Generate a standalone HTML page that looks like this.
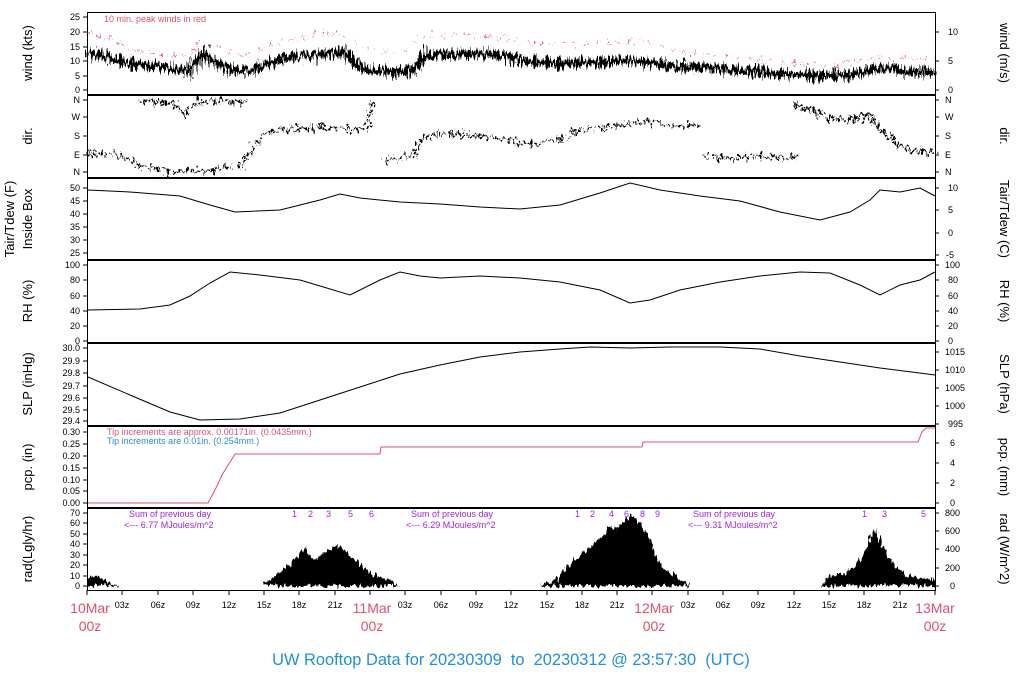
<!DOCTYPE html>
<html><head><meta charset="utf-8"><style>
html,body{margin:0;padding:0;background:#fff;}
svg{display:block;font-family:"Liberation Sans",sans-serif;}
.t{font-size:9px;fill:#000;}
.ti{font-size:13px;fill:#000;}
</style></head><body>
<svg width="1024" height="700" viewBox="0 0 1024 700">
<defs>
<filter id="jag" x="-5%" y="-50%" width="110%" height="200%">
<feTurbulence type="fractalNoise" baseFrequency="0.6 0.08" numOctaves="2" seed="3"/>
<feDisplacementMap in="SourceGraphic" scale="20" xChannelSelector="R" yChannelSelector="G"/>
</filter>
<filter id="jag2" x="-5%" y="-50%" width="110%" height="200%">
<feTurbulence type="fractalNoise" baseFrequency="0.4 0.1" numOctaves="2" seed="7"/>
<feDisplacementMap in="SourceGraphic" scale="10" xChannelSelector="R" yChannelSelector="G"/>
</filter>
<filter id="jag3" x="-5%" y="-50%" width="110%" height="200%">
<feTurbulence type="fractalNoise" baseFrequency="0.3 0.15" numOctaves="2" seed="11"/>
<feDisplacementMap in="SourceGraphic" scale="16" xChannelSelector="R" yChannelSelector="G"/>
</filter>
</defs>
<g fill="none" stroke="#000" stroke-width="1">
<rect x="87.5" y="12.5" width="848" height="82"/>
<rect x="87.5" y="95.5" width="848" height="82"/>
<rect x="87.5" y="178.5" width="848" height="81"/>
<rect x="87.5" y="260.5" width="848" height="82"/>
<rect x="87.5" y="343.5" width="848" height="82"/>
<rect x="87.5" y="426.5" width="848" height="81"/>
<rect x="87.5" y="508.5" width="848" height="82"/>
</g>
<g stroke="#000" stroke-width="1">
<path d="M83 17H87M83 32H87M83 47H87M83 61H87M83 76H87M83 90H87 M935 32H939M935 61H939M935 90H939"/>
<path d="M83 100H87M83 117H87M83 136H87M83 155H87M83 172H87M935 100H939M935 117H939M935 136H939M935 155H939M935 172H939"/>
<path d="M83 188H87M83 201H87M83 214H87M83 227H87M83 240H87M83 253H87M935 188H939M935 210H939M935 233H939M935 255H939"/>
<path d="M83 265H87M83 280H87M83 296H87M83 311H87M83 326H87M83 341H87M935 265H939M935 280H939M935 296H939M935 311H939M935 326H939M935 341H939"/>
<path d="M83 348H87M83 361H87M83 373H87M83 386H87M83 398H87M83 410H87M83 421H87M935 352H939M935 370H939M935 388H939M935 406H939M935 424H939"/>
<path d="M83 432H87M83 444H87M83 456H87M83 468H87M83 480H87M83 491H87M83 503H87M935 443H939M935 463H939M935 483H939M935 503H939"/>
<path d="M83 513H87M83 523H87M83 534H87M83 544H87M83 555H87M83 565H87M83 576H87M83 586H87M935 513H939M935 531H939M935 549H939M935 568H939M935 586H939"/>
<path d="M87 590V595M122 590V595M158 590V595M193 590V595M229 590V595M264 590V595M299 590V595M335 590V595M370 590V595M405 590V595M441 590V595M476 590V595M511 590V595M547 590V595M582 590V595M617 590V595M652 590V595M688 590V595M723 590V595M758 590V595M794 590V595M829 590V595M864 590V595M900 590V595M935 590V595"/>
</g>
<g class="t" text-anchor="end">
<text x="80" y="20">25</text><text x="80" y="35">20</text><text x="80" y="50">15</text><text x="80" y="64">10</text><text x="80" y="79">5</text><text x="80" y="93">0</text>
<text x="80" y="103">N</text><text x="80" y="120">W</text><text x="80" y="139">S</text><text x="80" y="158">E</text><text x="80" y="175">N</text>
<text x="80" y="191">50</text><text x="80" y="204">45</text><text x="80" y="217">40</text><text x="80" y="230">35</text><text x="80" y="243">30</text><text x="80" y="256">25</text>
<text x="80" y="268">100</text><text x="80" y="283">80</text><text x="80" y="299">60</text><text x="80" y="314">40</text><text x="80" y="329">20</text><text x="80" y="344">0</text>
<text x="80" y="351">30.0</text><text x="80" y="364">29.9</text><text x="80" y="376">29.8</text><text x="80" y="389">29.7</text><text x="80" y="401">29.6</text><text x="80" y="413">29.5</text><text x="80" y="424">29.4</text>
<text x="80" y="435">0.30</text><text x="80" y="447">0.25</text><text x="80" y="459">0.20</text><text x="80" y="471">0.15</text><text x="80" y="483">0.10</text><text x="80" y="494">0.05</text><text x="80" y="506">0.00</text>
<text x="80" y="516">70</text><text x="80" y="526">60</text><text x="80" y="537">50</text><text x="80" y="547">40</text><text x="80" y="558">30</text><text x="80" y="568">20</text><text x="80" y="579">10</text><text x="80" y="589">0</text>
</g>
<g class="t">
<text x="948" y="35">10</text><text x="948" y="64">5</text><text x="948" y="93">0</text>
<text x="945" y="103">N</text><text x="945" y="120">W</text><text x="945" y="139">S</text><text x="945" y="158">E</text><text x="945" y="175">N</text>
<text x="948" y="191">10</text><text x="948" y="213">5</text><text x="948" y="236">0</text><text x="946" y="258">-5</text>
<text x="945" y="268">100</text><text x="948" y="283">80</text><text x="948" y="299">60</text><text x="948" y="314">40</text><text x="948" y="329">20</text><text x="948" y="344">0</text>
<text x="945" y="355">1015</text><text x="945" y="373">1010</text><text x="945" y="391">1005</text><text x="945" y="409">1000</text><text x="948" y="427">995</text>
<text x="950" y="446">6</text><text x="950" y="466">4</text><text x="950" y="486">2</text><text x="950" y="506">0</text>
<text x="945" y="516">800</text><text x="945" y="534">600</text><text x="945" y="552">400</text><text x="945" y="571">200</text><text x="950" y="589">0</text>
</g>
<g class="ti" text-anchor="middle">
<text transform="translate(32,53) rotate(-90)">wind (kts)</text>
<text transform="translate(32,136) rotate(-90)">dir.</text>
<text transform="translate(14,219) rotate(-90)">Tair/Tdew (F)</text>
<text transform="translate(32,219) rotate(-90)">Inside Box</text>
<text transform="translate(32,301) rotate(-90)">RH (%)</text>
<text transform="translate(32,384) rotate(-90)">SLP (inHg)</text>
<text transform="translate(32,467) rotate(-90)">pcp. (in)</text>
<text transform="translate(32,549) rotate(-90)">rad(Lgly/hr)</text>
<text transform="translate(1000,53) rotate(90)">wind (m/s)</text>
<text transform="translate(1000,136) rotate(90)">dir.</text>
<text transform="translate(1000,219) rotate(90)">Tair/Tdew (C)</text>
<text transform="translate(1000,301) rotate(90)">RH (%)</text>
<text transform="translate(1000,384) rotate(90)">SLP (hPa)</text>
<text transform="translate(1000,467) rotate(90)">pcp. (mm)</text>
<text transform="translate(1000,549) rotate(90)">rad (W/m^2)</text>
</g>
<text x="104" y="22" font-size="9" fill="#e0506e">10 min. peak winds in red</text>
<polyline fill="none" stroke="#e0506e" stroke-width="1" stroke-dasharray="4 7" filter="url(#jag3)" points="88,33 110,38 130,50 160,55 190,56 200,40 220,48 240,56 270,46 300,38 330,32 350,40 370,50 400,55 425,35 450,36 470,34 500,38 530,44 560,45 600,42 640,40 680,52 720,56 760,60 800,64 840,64 870,58 900,58 935,60"/>
<polyline fill="none" stroke="#000" stroke-width="7" stroke-linejoin="round" filter="url(#jag)" points="88,55 100,54 115,60 130,64 160,67 190,71 197,60 205,53 215,62 230,70 250,70 270,63 290,57 310,56 330,53 345,52 355,64 370,70 400,72 415,70 425,55 445,54 470,54 500,55 530,62 560,64 600,62 630,60 645,62 670,66 700,67 730,70 760,72 790,74 820,76 850,75 870,70 890,68 910,72 935,72"/>
<g fill="none" stroke="#000" stroke-width="3" stroke-dasharray="3 2" filter="url(#jag3)">
<polyline points="88,153 110,154 125,158 140,166 160,170 180,171 210,170 232,168"/>
<polyline points="140,101 160,102 175,104 185,115 195,103 215,101 245,102" stroke-width="4"/>
<polyline points="240,168 252,150 262,135 280,130 320,128 350,130 368,128 372,102"/>
<polyline points="385,160 400,158 415,155 420,140 440,133 470,135 500,138 530,145 560,140 580,130 600,128 630,124 650,121 675,126 700,126"/>
<polyline points="705,157 730,158 760,156 790,158 798,156"/>
<polyline points="795,105 810,110 830,118 850,120 870,115 880,130 895,142 910,150 935,153" stroke-width="4"/>
</g>
<polyline fill="none" stroke="#000" stroke-width="1" points="88,190 130,192 180,196 210,205 235,212 280,210 320,200 340,194 360,198 400,202 440,204 480,207 520,209 560,205 600,193 630,183 660,190 700,196 740,201 780,212 820,220 850,212 870,200 880,190 900,192 920,188 935,196"/>
<polyline fill="none" stroke="#000" stroke-width="1" points="88,310 140,309 170,305 190,296 210,283 230,272 260,275 300,280 350,295 380,280 400,272 420,276 440,278 480,276 520,278 560,282 600,290 630,303 650,300 680,290 720,282 760,276 800,272 830,273 860,285 880,295 900,285 920,280 935,272"/>
<polyline fill="none" stroke="#000" stroke-width="1" points="88,377 130,395 170,412 200,420 240,419 280,413 320,400 360,387 400,374 440,365 480,357 520,352 560,349 590,347 630,348 670,347 720,347 760,349 800,356 840,362 880,368 935,375"/>
<text x="107" y="435" font-size="9" fill="#e0506e">Tip increments are approx. 0.00171in. (0.0435mm.)</text>
<text x="107" y="444" font-size="9" fill="#1f8fe0">Tip increments are 0.01in.  (0.254mm.)</text>
<polyline fill="none" stroke="#e0506e" stroke-width="1" points="88,503 208,503 215,490 222,475 230,462 235,454 380,454 381,447 642,447 643,442 918,442 922,432 926,428 935,428"/>
<g fill="#000" filter="url(#jag2)">
<path d="M87,586 L87,578 95,576 105,580 115,585 118,586Z"/>
<path d="M262,586 L270,580 280,572 290,565 300,552 305,548 315,560 325,552 333,548 340,546 350,555 360,565 375,575 390,580 400,586Z"/>
<path d="M540,586 L555,580 565,570 575,560 585,552 600,538 610,525 618,530 625,520 632,515 640,525 648,535 655,555 665,570 680,580 690,586Z"/>
<path d="M820,586 L830,575 845,575 860,560 870,540 876,528 882,545 895,565 905,575 920,578 935,580 935,586Z"/>
</g>
<g font-size="9" fill="#a020f0">
<text x="129" y="517">Sum of previous day</text><text x="124" y="528">&lt;--- 6.77 MJoules/m^2</text>
<text x="411" y="517">Sum of previous day</text><text x="406" y="528">&lt;--- 6.29 MJoules/m^2</text>
<text x="693" y="517">Sum of previous day</text><text x="688" y="528">&lt;--- 9.31 MJoules/m^2</text>
<text x="292" y="517">1</text><text x="308" y="517">2</text><text x="326" y="517">3</text><text x="348" y="517">5</text><text x="369" y="517">6</text>
<text x="575" y="517">1</text><text x="590" y="517">2</text><text x="609" y="517">4</text><text x="624" y="517">6</text><text x="640" y="517">8</text><text x="655" y="517">9</text>
<text x="862" y="517">1</text><text x="882" y="517">3</text><text x="921" y="517">5</text>
</g>
<g font-size="9" fill="#000" text-anchor="middle">
<text x="122" y="608">03z</text><text x="158" y="608">06z</text><text x="193" y="608">09z</text><text x="229" y="608">12z</text><text x="264" y="608">15z</text><text x="299" y="608">18z</text><text x="335" y="608">21z</text>
<text x="405" y="608">03z</text><text x="441" y="608">06z</text><text x="476" y="608">09z</text><text x="511" y="608">12z</text><text x="547" y="608">15z</text><text x="582" y="608">18z</text><text x="617" y="608">21z</text>
<text x="688" y="608">03z</text><text x="723" y="608">06z</text><text x="758" y="608">09z</text><text x="794" y="608">12z</text><text x="829" y="608">15z</text><text x="864" y="608">18z</text><text x="900" y="608">21z</text>
</g>
<g font-size="14" fill="#e0506e" text-anchor="middle">
<text x="90" y="613">10Mar</text><text x="90" y="631">00z</text>
<text x="372" y="613">11Mar</text><text x="372" y="631">00z</text>
<text x="654" y="613">12Mar</text><text x="654" y="631">00z</text>
<text x="935" y="613">13Mar</text><text x="935" y="631">00z</text>
</g>
<text x="511" y="665" font-size="16.4" fill="#1f8fe0" text-anchor="middle">UW Rooftop Data for 20230309&#160; to&#160; 20230312 @ 23:57:30&#160; (UTC)</text>
</svg>
</body></html>
